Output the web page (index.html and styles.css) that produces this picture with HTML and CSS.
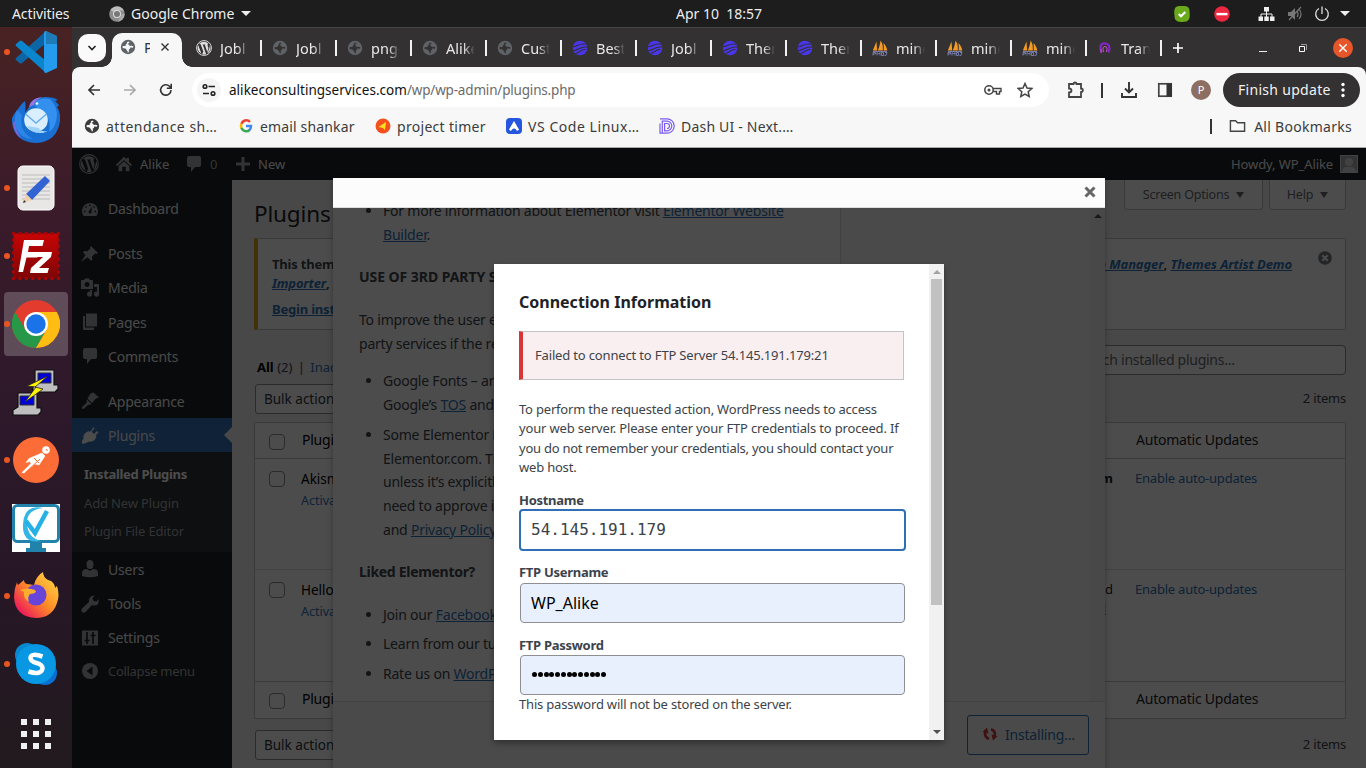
FILE: index.html
```
<!DOCTYPE html>
<html lang="en">
<head>
<meta charset="utf-8">
<title>Plugins</title>
<link rel="stylesheet" href="styles.css">
</head>
<body>
<svg class="defs" width="0" height="0">
  <symbol id="globe" viewBox="0 0 16 16"><circle cx="8" cy="8" r="7.200" fill="currentColor"/><path d="M8.300 2.500q-1.800.4-1.500 1.800.2 1-.9 1.200l-.4 1.500H3.200q-.9.300-.7 1.400.5 1 2 .9 1.700.1 1.900 1.300.3 1.300 1.200 1.700l.2 1.400q.9-.2 1.200-1.500l-.3-1.500 1.300-.9.200-1.300q1.100-.3 2.700.3l.6-1.200-1.600-.8-2.200.2-.6-1.400H8l-.2-1 1.500-.6V3z" fill="var(--cut)"/></symbol>
  <symbol id="wave" viewBox="0 0 16 16"><circle cx="8" cy="8" r="7.300" fill="#4a36ea"/><path d="M0 6.500C5 8 6 2.500 14 4.300M1 10.500c5 .8 6-4.500 14.500-3.400M3.500 13.500c3.500-.5 5-4.300 10-4" fill="none" stroke="#333132" stroke-width="1.100"/></symbol>
  <symbol id="sail" viewBox="0 0 16 16"><path d="M.8 10.500 4.500 1.500l.7 9zM5.800 10.500C7.200 7 8.200 4 8.500.5c2.300 3 2.600 6.500 2.300 10zM11.600 10.500c.4-3 .2-5-.3-7.500 2.200 2 3.500 4.500 4 7.500z" fill="#f29a24"/><path d="M1 15.500v-3h2.500V14H1M5 15.500v-3l2 1.500 1-1.500v3M9.500 12.500v3h2v-3zM13 12.500h2l-1 3h-1.500M1 11.500h14" fill="none" stroke="#7c83b5" stroke-width=".9"/></symbol>
  <symbol id="wp" viewBox="0 0 20 20"><circle cx="10" cy="10" r="9.300" fill="none" stroke="currentColor" stroke-width="1.200"/><path d="M2.800 6.300A8 8 0 0 0 6.800 17.200zM4 4.800C5 6 4.800 5 6 5.500L9.300 15l1.200-3.500L8.600 6l-1-.5h4.500l-1 .5 3 9.200 1.300-4.500c.4-2-.8-3-1-4.200-.1-1 .7-1.600 1.300-1.600A8 8 0 0 0 4 4.800zM10.200 11l-2.400 6.800c1.600.5 3.400.4 4.900-.1zM17.100 6.300c.2 1.800-.1 3-.7 4.600L14.200 17a8 8 0 0 0 2.900-10.700z" fill="currentColor"/></symbol>
  <symbol id="bubble" viewBox="0 0 20 20"><path d="M5 2h10q2 0 2 2v7q0 2-2 2h-4l-4 5v-5H5q-2 0-2-2V4q0-2 2-2z" fill="currentColor"/></symbol>
</svg>

<header class="topbar">
  <span class="activities">Activities</span>
  <svg class="app-ic" viewBox="0 0 16 16"><circle cx="8" cy="8" r="7.800" fill="#8d8d8d"/><path d="M8 8 1.500 4A8 8 0 0 1 15 4.500H8z" fill="#bdbdbd"/><path d="M9 15.800 13 8h2.500A8 8 0 0 1 9 15.800z" fill="#aaa"/><circle cx="8" cy="8" r="4" fill="#ddd"/><circle cx="8" cy="8" r="3" fill="#777"/></svg>
  <span class="appname">Google Chrome</span>
  <svg class="tri" viewBox="0 0 10 5"><path d="M0 0h10L5 5z" fill="#eee"/></svg>
  <span class="clock">Apr 10&nbsp; 18:57</span>
  <svg class="t1" viewBox="0 0 16 16"><path d="M5 0h5q6 0 5.500 6 1.500 10-5.500 9.800Q0 17 .5 9.500-1 0 5 0z" fill="#6aa81c"/><path d="M4.700 8 7 10.300 11.300 6" fill="none" stroke="#fff" stroke-width="2"/></svg>
  <svg class="t2" viewBox="0 0 16 16"><circle cx="8" cy="8" r="7.800" fill="#ee2740"/><path d="M2.500 6.900h11v2.400h-11z" fill="#fff"/></svg>
  <svg class="t3" viewBox="0 0 16 14"><path d="M5.500 0h5v4.500h-5zM0 9.500h4.500V14H0zM5.800 9.500h4.500V14H5.800zM11.500 9.500H16V14h-4.500z" fill="#eee"/><path d="M8 4v6M2.500 10V7h11v3" fill="none" stroke="#eee"/></svg>
  <svg class="t4" viewBox="0 0 16 16"><path d="M1 6h3l4-4v12l-4-4H1z" fill="#777"/><path d="M10 5q2 3 0 6M12 3q4 5 0 10M2 14 14 1" fill="none" stroke="#777" stroke-width="1.200"/></svg>
  <svg class="t5" viewBox="0 0 16 16"><path d="M5 2.500a6.300 6.300 0 1 0 6 0M8 .5V8" fill="none" stroke="#ddd" stroke-width="1.300"/></svg>
  <svg class="t6" viewBox="0 0 10 5"><path d="M0 0h10L5 5z" fill="#eee"/></svg>
</header>

<div class="desktop">
<nav class="dock">
  <div class="app run"><svg viewBox="0 0 48 48"><path d="M34 3v12L10 35q-1 1-2.500 0L4 32q-1-1 0-2z" fill="#0c66a5"/><path d="M34 45V33L10 13q-1-1-2.500 0L4 16q-1 1 0 2z" fill="#0a86cf"/><path d="M34 3 45 8v32l-11 5q-2 0-2-2V5q0-2 2-2z" fill="#259bed"/><path d="M34 3 45 8v8H34z" fill="#1a6595" opacity=".6"/></svg></div>
  <div class="app"><svg viewBox="0 0 48 48"><path d="M0 22q2-5 6-9 4-6 7-8 1 6 0 12l4-6Q18 2 33 1q9 0 13 3l-3 1 4 4-2 2q4 6 3 14-3 21-24 22Q2 46 0 26z" fill="#1a70d2"/><path d="M22 8Q27 1 38 3q6 6 7 14 0 14-8 19 3-16-9-21z" fill="#3390ee"/><path d="M17 11Q19 2 30 1q-7 3-8 8z" fill="#9a72e4"/><path d="M5 14q-6 14 3 24 5 5 13 5-15-8-11-24z" fill="#2b86e8"/><path d="M1 27q1 11 9 16-7-9-7-18z" fill="#7b66da"/><circle cx="24" cy="24" r="11.800" fill="#d9efff"/><path d="M15 30q4 8 16 7l5-2q-8 1-9-3z" fill="#9fd2fb"/><path d="m13.500 18 10.500 9 10.500-9" fill="none" stroke="#6aaeea" stroke-width="1.500"/><circle cx="25" cy="7.500" r="1.300" fill="#dff"/></svg></div>
  <div class="app run"><svg viewBox="0 0 48 48"><rect x="6" y="2" width="36" height="44" rx="5" fill="#e8e7e6" stroke="#fff"/><path d="M10 11h28M10 15h28M10 19h28M10 23h28M10 27h28M10 31h28M10 35h28" stroke="#bbb"/><path d="m14 30 19-18 5 5-18 19z" fill="#3163d2"/><path d="m14 30 6 6-9 3z" fill="#efd0aa"/><path d="m12 36 2 2-3 1z" fill="#333"/></svg></div>
  <div class="app run"><svg viewBox="0 0 48 48"><defs><linearGradient id="fz" x2="0" y2="1"><stop stop-color="#c80404"/><stop offset="1" stop-color="#7e0505"/></linearGradient></defs><rect x="1.500" y="1.500" width="45" height="45" fill="url(#fz)"/><rect x="1.500" y="1.500" width="45" height="45" fill="none" stroke="#a80505" stroke-width="3.400" stroke-dasharray="0 6.430" stroke-linecap="round"/><path d="M12 8h20l-1.500 6H17l-1 6h11l-1.500 5.500H14.500L11 40H6.500zM22 20h18l-1 5-12 11h10l-1.500 5H18l1-5 12-11H21z" fill="#fff"/></svg></div>
  <div class="app run active"><svg viewBox="0 0 48 48"><circle cx="24" cy="24" r="24" fill="#e33b2e"/><path d="M3.200 12A24 24 0 0 0 24 48l10-18-10 6-10.500-6z" fill="#279847"/><path d="M24 12h20.800A24 24 0 0 1 24 48l10.400-18z" fill="#fdbd13"/><circle cx="24" cy="24" r="12" fill="#fff"/><circle cx="24" cy="24" r="9.700" fill="#1a73e8"/></svg></div>
  <div class="app"><svg viewBox="0 0 48 48"><path d="M23 2h19v15h4v4l-3 3H21v-5l2-3zM6 25h19v15h4v4l-3 3H1v-5l5-3z" fill="#bebebe" stroke="#111" stroke-width="1.200"/><path d="M26 5h13v10H26zM8 28h14v9H8z" fill="#0000d8" stroke="#333"/><path d="M36 8 15 18l9 1-11 15 18-13-8-2z" fill="#fff400" stroke="#222" stroke-width=".8"/></svg></div>
  <div class="app run"><svg viewBox="0 0 48 48"><circle cx="24" cy="24" r="23" fill="#fb6c37"/><circle cx="34" cy="14" r="3.800" fill="#fff"/><path d="m30 17 3 3-6 9-4-1-11 9-2-.5 9-9-1-2-4 1 3-4z" fill="#fff" stroke="#fff" stroke-width=".6"/><path d="m14 36 14-13M22 22l5 5M34 13l1.500 2" stroke="#fb6c37"/></svg></div>
  <div class="app"><svg viewBox="0 0 48 48"><path d="M0 0h48v48H0z" fill="#fff"/><rect x="1.500" y="1.500" width="45" height="36" rx="4" fill="#fff" stroke="#2183ac" stroke-width="3"/><path d="M18 39h12v5h4v4H14v-4h4z" fill="#2183ac"/><path d="M31 4Q12 0 11 20t18 17q-13-3-14-17T31 4z" fill="#34b5e6"/><path d="m14 17 9 12L35 7" fill="none" stroke="#26b0e6" stroke-width="4.500"/></svg></div>
  <div class="app run"><svg viewBox="0 0 48 48"><defs><linearGradient id="ff" x1="1" x2="0" y2="1"><stop stop-color="#ffe34a"/><stop offset=".5" stop-color="#ff8a26"/><stop offset=".85" stop-color="#ed2058"/></linearGradient></defs><path d="M5 10q0 2 1 3l6-5q0 3 3 4l7 1q2-9 9-13 0 5 5 8l3 1q4 3 4 7l2-2q3 9 0 17-5 15-21 15Q3 45 2 25q0-8 3-15z" fill="url(#ff)"/><circle cx="24" cy="23" r="10.500" fill="#6845d8"/><path d="M8 18q8-3 15 0l1 2q-2 2-6 2-3 3-1 8-6-3-5-10z" fill="#ffad2c"/></svg></div>
  <div class="app run"><svg viewBox="0 0 48 48"><circle cx="15" cy="15" r="12" fill="#0787cd"/><circle cx="33" cy="33" r="12" fill="#0870d0"/><circle cx="24" cy="24" r="20" fill="#0797e3"/><path d="M30.500 16.500Q19 12.500 18.500 18q0 3.500 6 5 6 1.500 6 5.500-1 7-14 3" fill="none" stroke="#fff" stroke-width="4.500"/></svg></div>
  <div class="app grid"><svg viewBox="0 0 48 48"><path d="M9 9h6v6H9zM21 9h6v6h-6zM33 9h6v6h-6zM9 21h6v6H9zM21 21h6v6h-6zM33 21h6v6h-6zM9 33h6v6H9zM21 33h6v6h-6zM33 33h6v6h-6z" fill="#efefef"/></svg></div>
</nav>

<main class="browser">
  <div class="tabstrip">
    <div class="search-tabs"><svg viewBox="0 0 10 10"><path d="m1.500 3 3.500 3.500L8.500 3" fill="none" stroke="#222" stroke-width="1.600"/></svg></div>
    <div class="tab-active"><svg class="fav grey light" viewBox="0 0 16 16"><use href="#globe"/></svg><span>P</span><svg class="tx" viewBox="0 0 8 8"><path d="m.5.5 7 7m0-7-7 7" stroke="#333" stroke-width="1.400"/></svg></div>
    <div class="tabs">
      <div class="tab first"><svg class="fav white"><use href="#wp"/></svg><span>Jobl</span></div>
      <div class="tab"><svg class="fav grey"><use href="#globe"/></svg><span>Jobl</span></div>
      <div class="tab"><svg class="fav grey"><use href="#globe"/></svg><span>png-</span></div>
      <div class="tab"><svg class="fav grey"><use href="#globe"/></svg><span>Alike</span></div>
      <div class="tab"><svg class="fav grey"><use href="#globe"/></svg><span>Cust</span></div>
      <div class="tab"><svg class="fav"><use href="#wave"/></svg><span>Best</span></div>
      <div class="tab"><svg class="fav"><use href="#wave"/></svg><span>Jobl</span></div>
      <div class="tab"><svg class="fav"><use href="#wave"/></svg><span>Ther</span></div>
      <div class="tab"><svg class="fav"><use href="#wave"/></svg><span>Ther</span></div>
      <div class="tab"><svg class="fav"><use href="#sail"/></svg><span>mind</span></div>
      <div class="tab"><svg class="fav"><use href="#sail"/></svg><span>mind</span></div>
      <div class="tab"><svg class="fav"><use href="#sail"/></svg><span>mind</span></div>
      <div class="tab"><svg class="fav" viewBox="0 0 16 16"><path d="M4.500 12.500Q1.500 3 8 3.500t3.500 9" fill="none" stroke="#8427c8" stroke-width="2.200"/><path d="M6.500 12Q5 6.500 8 6.500T9.500 12M4 9v4" fill="none" stroke="#d052c8" stroke-width="1"/></svg><span>Tran</span></div>
    </div>
    <svg class="plus" viewBox="0 0 10 10"><path d="M5 0v10M0 5h10" stroke="#fff" stroke-width="1.700"/></svg>
    <svg class="wmin" viewBox="0 0 8 8"><path d="M0 7.500h8" stroke="#eee"/></svg>
    <svg class="wmax" viewBox="0 0 8 8"><path d="M.5 2.500h5v5h-5z" fill="none" stroke="#fff"/><path d="M2 .5h5.500V6" fill="none" stroke="#999"/></svg>
    <span class="wclose"><svg viewBox="0 0 8 8"><path d="m.3.3 7.400 7.400m0-7.400L.3 7.700" stroke="#fff" stroke-width="1.400"/></svg></span>
  </div>
  <div class="toolbar">
    <svg class="nav" viewBox="0 0 16 16"><path d="M14 8H3m5-5L3 8l5 5" fill="none" stroke="#333" stroke-width="1.700"/></svg>
    <svg class="nav" viewBox="0 0 16 16"><path d="M2 8h11M8 3l5 5-5 5" fill="none" stroke="#aaa" stroke-width="1.700"/></svg>
    <svg class="nav" viewBox="0 0 16 16"><path d="M13 8a5.200 5.200 0 1 1-1.500-3.700L13 6M13.200 1.800V6.200H8.800" fill="none" stroke="#333" stroke-width="1.600"/></svg>
    <div class="omni">
      <span class="site"><svg viewBox="0 0 14 14"><circle cx="3" cy="3.500" r="1.800"/><path d="M6.500 3.500H13M1 10.500h6"/><circle cx="11" cy="10.500" r="1.800"/></svg></span>
      <span class="url">alikeconsultingservices.com<i>/wp/wp-admin/plugins.php</i></span>
      <svg class="key" viewBox="0 0 18 12"><circle cx="5" cy="6" r="4.200" fill="none" stroke="#444" stroke-width="1.500"/><circle cx="5" cy="6" r="1.500" fill="#444"/><path d="M9.200 4.500H17v3h-1.500V10h-3V7.500H9.200" fill="none" stroke="#444" stroke-width="1.400"/></svg>
      <svg class="star" viewBox="0 0 16 16"><path d="m8 1.500 2 4.500 4.800.5-3.600 3.200 1 4.800L8 12l-4.200 2.500 1-4.800L1.200 6.500 6 6z" fill="none" stroke="#444" stroke-width="1.500"/></svg>
    </div>
    <svg class="puz" viewBox="0 0 18 18"><path d="M2 3h4.500q0-1.500 1.500-1.500T9.500 3H14v4.500q1.800 0 1.800 1.700T14 11v5H2v-4.500q2.500 0 2.500-2T2 7.500z" fill="none" stroke="#444" stroke-width="1.800"/></svg>
    <i class="bar"></i>
    <svg class="dl" viewBox="0 0 16 16"><path d="M8 0v10M4 6.500l4 4 4-4M1 11v4h14v-4" fill="none" stroke="#333" stroke-width="1.900"/></svg>
    <svg class="pan" viewBox="0 0 16 16"><rect x="1.800" y="1.800" width="12.400" height="12.400" fill="none" stroke="#444" stroke-width="1.700"/><path d="M9.500 1.500H15v13H9.500z" fill="#333"/></svg>
    <span class="avatar">P</span>
    <span class="finish">Finish update<svg viewBox="0 0 4 16"><circle cx="2" cy="2.500" r="1.700"/><circle cx="2" cy="8" r="1.700"/><circle cx="2" cy="13.500" r="1.700"/></svg></span>
  </div>
  <div class="bookmarks">
    <svg class="fav dk light"><use href="#globe"/></svg><span class="b1">attendance sh…</span>
    <svg class="fav" viewBox="0 0 16 16"><g fill="none" stroke-width="2.500"><path d="M12 4A5 5 0 0 0 3.500 6" stroke="#ea4335"/><path d="M3.500 5.700a5 5 0 0 0 0 4.600" stroke="#fbbc05"/><path d="M3.500 10a5 5 0 0 0 8 2" stroke="#34a853"/><path d="M8 8h5q0 3-2 4.500" stroke="#4285f4"/></g></svg><span class="b2">email shankar</span>
    <svg class="fav" viewBox="0 0 16 16"><circle cx="8" cy="8" r="7.500" fill="#f4511e"/><path d="m3.500 9 7.500-5-1 8-2-2z" fill="#ffe21f"/></svg><span class="b3">project timer</span>
    <svg class="fav" viewBox="0 0 16 16"><rect width="16" height="16" rx="4" fill="#2456df"/><path d="M8 3 3 11.500Q5 14 6 11.500q2-2 4 0 1 2.500 3 0z" fill="#fff"/></svg><span class="b4">VS Code Linux…</span>
    <svg class="fav" viewBox="0 0 16 16"><path d="M1 .8h7a7.200 7.200 0 0 1 0 14.400H1V5.500M3.300 15V3.200H8a4.800 4.800 0 0 1 0 9.600H5.600V5.500H8a2.500 2.500 0 0 1 0 5" fill="none" stroke="#7c5cf0" stroke-width="1.200"/></svg><span class="b5">Dash UI - Next.…</span>
    <i class="bar"></i>
    <svg class="fold" viewBox="0 0 18 14"><path d="M1.500 1.500H7L9 3.500h7.500v9h-15z" fill="none" stroke="#444" stroke-width="1.500"/></svg><span class="b6">All Bookmarks</span>
  </div>

  <div class="viewport">
    <div class="adminbar">
      <svg class="a-wp"><use href="#wp"/></svg>
      <svg class="a-home" viewBox="0 0 20 20"><path d="m10 2 3 3V3h2.500v4.500L19 11l-1.500 1.500L10 5.500l-7.500 7L1 11zM10 7l6 5.500V18h-4v-5H8v5H4v-5.500z" fill="currentColor"/></svg><span class="a1">Alike</span>
      <svg class="a-com"><use href="#bubble"/></svg><span class="a2">0</span>
      <svg class="a-plus" viewBox="0 0 14 14"><path d="M7 0v14M0 7h14" stroke="currentColor" stroke-width="3"/></svg><span class="a3">New</span>
      <span class="howdy">Howdy, WP_Alike</span>
      <svg class="a-av" viewBox="0 0 18 18"><path d="M0 0h18v18H0z" fill="#ddd"/><path d="M1 1h16v16H1z" fill="#aaa"/><circle cx="9" cy="7" r="4" fill="#ddd"/><path d="M2 17q1-6 7-5 6-1 7 5z" fill="#ddd"/></svg>
    </div>
    <div class="wp">
      <aside class="menu">
        <div class="mi up1"><svg viewBox="0 0 20 20"><path d="M3.800 17A8 8 0 1 1 16.200 17zM10 14.500a1.700 1.700 0 0 0 1.500-2.500L12 7.500 9 12a1.700 1.700 0 0 0 1 2.500z" fill-rule="evenodd" fill="currentColor"/><path d="M4 12.500h1.500M5.500 7.500l1 1M10 5.500V7M14.500 7.500l-1 1M16 12.500h-1.500" stroke="#1d2327" stroke-width="1.500"/></svg>Dashboard</div>
        <div class="mi gap"><svg viewBox="0 0 20 20"><path d="m11 2 7 7-1.500 1-1.500-.5-3 3 .3 3-1.300 1.300-3.500-3.500L1 18l4.500-7L3 8.500 4.300 7l3.200.3 3-3L10 3z" fill="currentColor"/></svg>Posts</div>
        <div class="mi"><svg viewBox="0 0 20 20"><path fill-rule="evenodd" d="M2 2h2l1-1.500h4L10 2h2q1 0 1 1v8H1V3q0-1 1-1zM7 4a2.500 2.500 0 1 0 .1 0zM14 6h5v10a2.500 2.500 0 1 1-2-2.300V9h-3zM12 12v4a2.500 2.500 0 1 1-2-2.300V12z" fill="currentColor"/></svg>Media</div>
        <div class="mi"><svg viewBox="0 0 20 20"><path d="M6 1.500h11v13H6zM3 4h2v11.500h9V18H3z" fill="currentColor"/></svg>Pages</div>
        <div class="mi"><svg><use href="#bubble"/></svg>Comments</div>
        <div class="mi gap"><svg viewBox="0 0 20 20"><path d="m10.500 2.500 3-1 5.500 5-3 1-4 4.500-4.500-4.500zM7 8.500l4.500 4.500-2 1-1-.5-5 4.500q-2 .5-1.500-2l5-4.500-.5-1.500z" fill="currentColor"/></svg>Appearance</div>
        <div class="mi cur"><svg viewBox="0 0 20 20"><path d="m13 2 1.500 1.500-3 3 2.500 2.500 3-3 1.500 1.500-3 3 1 1q-2 6-7.500 5L6 18l-4 1v-3l1.500-2.500q-1-5 5-7.500l1 1 3-3z" fill="currentColor"/></svg>Plugins</div>
        <div class="sub"><b>Installed Plugins</b><span>Add New Plugin</span><span>Plugin File Editor</span></div>
        <div class="mi"><svg viewBox="0 0 20 20"><ellipse cx="10" cy="5.500" rx="3.500" ry="4.500" fill="currentColor"/><path d="M2 17v-3q0-4 5-4l3 2 3-2q5 0 5 4v3q-8 2.500-16 0z" fill="currentColor"/></svg>Users</div>
        <div class="mi"><svg viewBox="0 0 20 20"><path d="M16.500 7.500 18.500 5q1 6-3.500 6.500-2 0-3-.5l-6.500 7q-2 1.500-3.500 0-1.500-1.500 0-3.500L9 8Q8 1.500 15 1.500L12.500 4l1 3z" fill="currentColor"/></svg>Tools</div>
        <div class="mi"><svg viewBox="0 0 20 20"><path d="M2.500 2.500h15q.5 0 .5.5v14.500H2V3q0-.5.500-.5z" fill="currentColor"/><path d="M7 4v12M4.500 12.500h5M13 4v12M10.500 7.500h5" stroke="#1d2327" stroke-width="1.700"/></svg>Settings</div>
        <div class="mi col"><svg viewBox="0 0 20 20"><circle cx="10" cy="10" r="8" fill="currentColor"/><path d="M12.500 5.500v9L6.500 10z" fill="#1d2327"/></svg>Collapse menu</div>
      </aside>
      <section class="content">
        <div class="head"><h1>Plugins</h1><div class="meta"><span class="so">Screen Options <i></i></span><span class="hp">Help <i></i></span></div></div>
        <div class="notice"><div class="nl"><b>This theme</b><b><a><em>Importer</em></a>, <a><em>One</em></a></b><b class="beg"><a>Begin installing</a></b></div>
          <b class="nr"><a><em>WP Job Manager</em></a>, <a><em>Themes Artist Demo</em></a></b>
          <svg viewBox="0 0 14 14"><circle cx="7" cy="7" r="6.800" fill="#787c82"/><path d="m4.300 4.300 5.400 5.400m0-5.400L4.300 9.700" stroke="#fff" stroke-width="2"/></svg></div>
        <div class="filters"><span class="views"><b>All</b> (2) <i>|</i> <a>Inactive</a></span><span class="search">Search installed plugins...</span></div>
        <div class="actions"><span class="select">Bulk actions</span><span class="items">2 items</span></div>
        <div class="table">
          <div class="tr th"><i class="cb"></i><span class="c1">Plugin</span><span class="c2"></span><span class="c3">Automatic Updates</span></div>
          <div class="tr r1"><i class="cb"></i><span class="c1">Akismet<a>Activate</a></span><span class="c2"><b>Spam</b></span><span class="c3"><a>Enable auto-updates</a></span></div>
          <div class="tr r2"><i class="cb"></i><span class="c1">Hello Dolly<a>Activate</a></span><span class="c2">summed<br><a>all</a></span><span class="c3"><a>Enable auto-updates</a></span></div>
          <div class="tr tf"><i class="cb"></i><span class="c1">Plugin</span><span class="c2"></span><span class="c3">Automatic Updates</span></div>
        </div>
        <div class="actions bottom"><span class="select">Bulk actions</span><span class="items">2 items</span></div>
      </section>
    </div>
    <div class="shade"></div>

    <div class="thickbox">
      <div class="tb-title"><svg viewBox="0 0 12 12"><path d="m1.500 1.500 9 9m0-9-9 9" stroke="#666" stroke-width="3"/></svg></div>
      <div class="tb-body">
        <div class="desc">
          <ul class="u0"><li>For more information about Elementor visit <a>Elementor Website<br>Builder</a>.</li></ul>
          <h4 class="h1st">USE OF 3RD PARTY SERVICES</h4>
          <p>To improve the user experience<br>party services if the required</p>
          <ul class="u1"><li>Google Fonts – are<br>Google’s <a>TOS</a> and</li><li>Some Elementor Pro<br>Elementor.com. The<br>unless it’s explicitly<br>need to approve it<br>and <a>Privacy Policy</a></li></ul>
          <h4 class="h2nd">Liked Elementor?</h4>
          <ul class="u2"><li>Join our <a>Facebook</a></li><li>Learn from our tutorials</li><li>Rate us on <a>WordPress</a></li></ul>
        </div>
        <div class="side"></div>
        <div class="sb"><i></i></div>
      </div>
      <div class="tb-foot"><span class="btn"><svg viewBox="0 0 16 16"><path d="M9 3.200A5 5 0 0 1 12.300 10.500M7 12.800A5 5 0 0 1 3.700 5.500" fill="none" stroke="#d63638" stroke-width="2.700"/><path d="M9.500 8.500 15.500 10l-4.500 4.500zM6.500 7.500.5 6 5 1.500z" fill="#d63638"/></svg>Installing...</span></div>
      <div class="tb-shade"></div>
    </div>

    <div class="dialog">
      <div class="form">
        <h2>Connection Information</h2>
        <div class="err">Failed to connect to FTP Server 54.145.191.179:21</div>
        <p><span class="l1">To perform the requested action, WordPress needs to access</span><br><span class="l2">your web server. Please enter your FTP credentials to proceed. If</span><br><span class="l3">you do not remember your credentials, you should contact your</span><br>web host.</p>
        <label>Hostname</label><div class="inp focus">54.145.191.179</div>
        <label>FTP Username</label><div class="inp">WP_Alike</div>
        <label>FTP Password</label><div class="inp pw"><i></i><i></i><i></i><i></i><i></i><i></i><i></i><i></i><i></i><i></i><i></i><i></i><i></i></div>
        <small>This password will not be stored on the server.</small>
      </div>
      <div class="dsb"><i class="up"></i><i class="thumb"></i><i class="down"></i></div>
    </div>
  </div>
</main>
</div>
</body>
</html>
```
FILE: styles.css
```
* { box-sizing: border-box; }
body { margin: 0; width: 1366px; height: 768px; overflow: hidden; font-family: "Noto Sans", sans-serif; background: #1d1d1d; white-space: nowrap; }
i { font-style: normal; }
svg { flex: none; display: block; }
.defs { position: absolute; }
a { color: #2f72b5; text-decoration: underline; }

.topbar { height: 27px; display: flex; align-items: center; color: #eee; font-size: 14px; line-height: 27px; background: #1d1d1d; }
.activities { width: 109px; padding-left: 12px; letter-spacing: -.1px; }
.app-ic { width: 16px; height: 16px; margin-right: 6px; }
.appname { width: 110px; letter-spacing: 0; }
.tri, .t6 { width: 10px; height: 5px; }
.clock { margin-left: 425px; width: 498px; letter-spacing: 0; }
.t1 { width: 16px; height: 16px; margin-right: 24px; }
.t2 { width: 16px; height: 16px; margin-right: 28px; }
.t3 { width: 17px; height: 14px; margin-right: 12px; }
.t4 { width: 16px; height: 16px; margin-right: 11px; }
.t5 { width: 16px; height: 16px; margin-right: 10px; }

.desktop { display: flex; height: 741px; }
.dock { width: 72px; overflow: hidden; background: linear-gradient(#492323, #3a1b2a 25%, #2e192b 50%, #271726 75%, #211a1e); }
.app { height: 68px; display: flex; align-items: center; padding-left: 12px; position: relative; }
.app:first-child { margin-top: -9px; }
.app svg { width: 48px; height: 48px; }
.app.grid { padding-top: 4px; }
.app.run::before { content: ""; position: absolute; left: 4px; top: 31px; width: 6px; height: 6px; border-radius: 50%; background: #e95420; z-index: 2; }
.app.active::after { content: ""; position: absolute; left: 4px; top: 2px; width: 64px; height: 64px; border-radius: 4px; background: rgba(255,255,255,.22); }
.app.active svg { position: relative; z-index: 1; }

.browser { width: 1294px; display: flex; flex-direction: column; background: #333132; }
.tabstrip { height: 40px; border-top: 1px solid #454344; display: flex; align-items: center; padding: 0 13px 0 6px; font-size: 14.500px; }
.search-tabs { width: 28px; height: 28px; border-radius: 10px; background: #fafafa; display: grid; place-items: center; margin-right: 6px; }
.search-tabs svg { width: 10px; height: 10px; }
.tab-active { width: 70px; height: 34px; align-self: flex-end; border-radius: 10px 10px 0 0; background: #f7f7f7; display: flex; align-items: center; padding: 0 12px 6px 8px; position: relative; color: #333; }
.tab-active::before, .tab-active::after { content: ""; position: absolute; bottom: 0; width: 10px; height: 10px; }
.tab-active::before { left: -10px; background: radial-gradient(circle at 0 0, transparent 9.5px, #f7f7f7 10px); }
.tab-active::after { right: -10px; background: radial-gradient(circle at 100% 0, transparent 9.5px, #f7f7f7 10px); }
.tab-active span { width: 6px; overflow: hidden; margin: 0 11px 0 8px; }
.tx { width: 8px; height: 8px; }
.fav { width: 16px; height: 16px; }
.grey { color: #5f6368; --cut: #333132; }
.light { --cut: #f7f7f7; }
.dk { color: #3c3c3c; }
.white { color: #ddd; }
.tabs { display: flex; margin-left: 4px; }
.tab { width: 75px; height: 16px; border-right: 2px solid #f2f2f2; padding-left: 10px; display: flex; align-items: center; color: #e8e8e8; }
.tab.first { width: 76px; }
.tab span { margin-left: 8px; width: 29px; overflow: hidden; line-height: 22px; -webkit-mask-image: linear-gradient(90deg, #000 60%, transparent); mask-image: linear-gradient(90deg, #000 60%, transparent); }
.plus { width: 10px; height: 10px; margin-left: 11px; }
.wmin { width: 8px; height: 8px; margin-left: 76px; }
.wmax { width: 8px; height: 8px; margin-left: 32px; }
.wclose { width: 20px; height: 20px; border-radius: 50%; background: #e6562a; margin-left: auto; display: grid; place-items: center; }
.wclose svg { width: 8px; height: 8px; }

.toolbar { height: 46px; background: #f7f7f7; border-radius: 8px 8px 0 0; display: flex; align-items: center; padding: 0 6px 0 14px; }
.nav { width: 16px; height: 16px; margin-right: 20px; }
.omni { width: 857px; height: 34px; border-radius: 17px; background: #fff; margin-left: -2px; display: flex; align-items: center; padding: 0 16px 0 5px; font-size: 13.500px; color: #111; }
.site { width: 24px; height: 24px; border-radius: 50%; background: #f5f5f5; display: grid; place-items: center; margin-right: 8px; }
.site svg { width: 14px; height: 14px; fill: none; stroke: #222; stroke-width: 1.600; }
.url { letter-spacing: .03px; }
.url i { color: #6b6b6b; letter-spacing: -.18px; }
.key { width: 18px; height: 12px; margin-left: auto; margin-right: 15px; }
.star { width: 16px; height: 16px; }
.puz { width: 18px; height: 18px; margin-left: 18px; }
.bar { width: 2px; height: 15px; background: #333; }
.toolbar .bar { margin-left: 16px; }
.dl { width: 16px; height: 16px; margin-left: 18px; }
.pan { width: 16px; height: 16px; margin-left: 20px; }
.avatar { width: 20px; height: 20px; border-radius: 50%; background: #8d6e63; color: #fff; font-size: 11px; line-height: 20px; text-align: center; margin-left: 18px; }
.finish { width: 137px; height: 34px; border-radius: 17px; background: #333132; color: #f2f2f2; margin-left: auto; padding: 0 15px 1px; display: flex; align-items: center; justify-content: space-between; font-size: 14px; letter-spacing: .3px; }
.finish svg { width: 4px; height: 16px; fill: #fff; }
.bookmarks { height: 35px; background: #f7f7f7; border-bottom: 1px solid #aaa; display: flex; align-items: center; padding: 0 0 8px 12px; font-size: 14px; color: #3c3c3c; }
.bookmarks span { margin-left: 6px; }
.b1 { width: 132px; letter-spacing: .5px; } .b2 { width: 115px; letter-spacing: .15px; } .b3 { width: 109px; letter-spacing: .3px; } .b4 { width: 131px; letter-spacing: .55px; } .b5 { letter-spacing: .2px; }
.bookmarks .bar { margin-left: auto; margin-right: 17px; }
.fold { width: 17px; height: 14px; }
.bookmarks .b6 { margin-left: 8px; margin-right: 14px; letter-spacing: .28px; }

.viewport { height: 620px; position: relative; overflow: hidden; background: #f0f0f1; font-size: 13px; }
.shade { position: absolute; inset: 0; background: rgba(0,0,0,.7); }
.adminbar { height: 32px; background: #1d2327; color: #f0f0f1; display: flex; align-items: center; padding: 0 8px 0 7px; line-height: 32px; }
.adminbar svg { color: #a7aaad; width: 20px; height: 20px; }
.adminbar .a-home { margin: 0 6px 0 16px; width: 18px; }
.a1 { width: 45px; padding-left: 1px; }
.a2 { width: 32px; padding-left: 6px; color: #a7aaad; }
.adminbar .a-plus { width: 14px; height: 14px; margin-right: 8px; }
.howdy { margin-left: auto; margin-right: 7px; letter-spacing: -.1px; }
.adminbar .a-av { width: 18px; height: 18px; }
.wp { display: flex; height: 588px; }
.menu { width: 160px; background: #1d2327; padding-top: 12px; font-size: 14px; color: #f0f0f1; }
.mi { height: 34.200px; display: flex; align-items: center; padding-left: 8px; letter-spacing: -.2px; position: relative; }
.up1 { padding-bottom: 1px; }
.mi svg { width: 20px; height: 20px; color: #a7aaad; margin-right: 8px; }
.gap { margin-top: 10.500px; }
.cur { background: #3573bd; }
.cur svg { color: #fff; }
.cur::after { content: ""; position: absolute; right: 0; border: 8px solid transparent; border-right-color: #f0f0f1; }
.sub { height: 100px; background: #2c3338; display: flex; flex-direction: column; padding: 8px 12px; font-size: 13px; line-height: 28.400px; color: #a7aaad; }
.sub b { color: #fff; letter-spacing: -.3px; }
.sub span { letter-spacing: -.15px; }
.col { font-size: 13px; color: #a7aaad; letter-spacing: -.3px; height: 32px; }
.content { width: 1134px; padding: 0 20px 0 22px; color: #3c434a; }
.head { height: 58px; display: flex; justify-content: space-between; }
h1 { margin: 18px 0 0; font-size: 22.500px; font-weight: 400; line-height: 32px; color: #1d2327; letter-spacing: -.15px; }
.meta { display: flex; gap: 6px; color: #646970; font-size: 12.500px; letter-spacing: -.2px; }
.meta span { height: 30px; border: 1px solid #c3c4c7; border-top: 0; border-radius: 0 0 4px 4px; background: #fff; display: flex; align-items: center; justify-content: center; gap: 7px; }
.so { width: 139px; } .hp { width: 77px; }
.meta i { border: 4px solid transparent; border-top: 6px solid #646970; border-bottom: 0; }
.notice { height: 92px; border: 1px solid #c3c4c7; border-left: 4px solid #dba617; background: #fff; display: flex; padding: 16px 13px 0 14px; line-height: 19px; }
.nl { display: flex; flex-direction: column; letter-spacing: -.2px; color: #3c434a; }
.beg { margin-top: 7px; }
.nr { margin-left: auto; margin-right: 26px; letter-spacing: -.12px; }
.notice svg { width: 14px; height: 14px; margin-top: -4px; }
.filters { height: 46px; display: flex; justify-content: space-between; padding-top: 15px; }
.views { padding: 12px 0 0 3px; line-height: 20px; }
.views b { color: #000; }
.views i { margin: 0 2px; }
.views a { text-decoration: none; }
.search { width: 280px; height: 30px; border: 1px solid #8c8f94; border-radius: 4px; background: #fff; padding-left: 8px; font-size: 14px; line-height: 28px; color: #646970; letter-spacing: -.27px; }
.actions { height: 46px; display: flex; justify-content: space-between; padding: 8px 0 0 1px; }
.select { width: 140px; height: 30px; border: 1px solid #8c8f94; border-radius: 3px; background: #fff; padding-left: 8px; line-height: 28px; font-size: 13.500px; color: #2c3338; }
.items { line-height: 29px; letter-spacing: -.2px; }
.table { height: 297px; border: 1px solid #c3c4c7; background: #fff; }
.tr { display: flex; font-size: 13.500px; line-height: 19px; color: #1d2327; }
.cb { width: 16px; height: 16px; border: 1px solid #8c8f94; border-radius: 4px; background: #fff; margin: 12px 16px 0 14px; }
.th, .tf { height: 36px; padding-top: 0; }
.th .c1, .tf .c1, .th .c3, .tf .c3 { padding-top: 7px; font-size: 14px; letter-spacing: -.23px; padding-left: 1px; }
.th .cb, .tf .cb { margin-top: 11px; }
.th { border-bottom: 1px solid #c3c4c7; }
.r1, .r2 { height: 111px; border-bottom: 1px solid #dcdcde; }
.r2 { height: 112px; border-color: #c3c4c7; }
.r1 .c1, .r2 .c1, .r1 .c2, .r2 .c2, .r1 .c3, .r2 .c3 { padding-top: 10px; }
.c1 { width: 300px; color: #000; display: flex; flex-direction: column; line-height: 20px; }
.c1 a { text-decoration: none; font-size: 12.500px; line-height: 24px; }
.c2 { width: 513px; text-align: right; font-size: 13px; padding-right: 1px; }
.c2 a { margin-right: 7px; }
.c3 { margin-left: 21px; font-size: 13px; letter-spacing: -.22px; }
.c3 a { text-decoration: none; }
.bottom { padding-top: 11px; }

.thickbox { position: absolute; left: 261px; top: 30px; width: 772px; height: 600px; background: #fff; box-shadow: 0 3px 6px rgba(0,0,0,.3); display: flex; flex-direction: column; }
.tb-title { height: 30px; background: #fcfcfc; border-bottom: 1px solid #ddd; display: flex; justify-content: flex-end; align-items: center; padding: 0 9px 2px; position: relative; z-index: 1; }
.tb-title svg { width: 12px; height: 12px; }
.tb-body { height: 493px; display: flex; overflow: hidden; font-size: 14px; line-height: 24px; color: #3c434a; letter-spacing: -.22px; }
.desc { width: 507px; padding-left: 26px; }
.desc ul { margin: 0; padding-left: 24px; }
.desc .u0 { margin-top: -9px; }
.desc h4 { margin: 0; font-size: 14px; letter-spacing: -.3px; }
.desc .h1st { margin-top: 18px; letter-spacing: -.05px; }
.desc p { margin: 19px 0 13px; }
.u1 { line-height: 23.850px; }
.u1 li + li { margin-top: 6px; }
.desc .h2nd { margin: 18px 0 19px; }
.u2 li { margin-bottom: 5.500px; }
.side { width: 250px; border-left: 1px solid #ddd; background: #f4f8f6; }
.sb { width: 15px; background: #f1f1f1; display: flex; justify-content: center; padding-top: 6px; }
.sb i { width: 8px; height: 4px; border: 4px solid transparent; border-bottom-color: #505050; border-top: 0; }
.tb-foot { height: 77px; border-top: 1px solid #ddd; background: #f4f8f6; display: flex; justify-content: flex-end; padding: 13px 16px; }
.btn { width: 122px; height: 40px; border: 1px solid #2f72b5; border-radius: 3px; color: #2f72b5; display: flex; align-items: center; padding: 0 0 2px 14px; gap: 7px; font-size: 14px; letter-spacing: -.2px; }
.btn svg { width: 16px; height: 16px; }
.tb-shade { position: absolute; inset: 30px 0 0; background: rgba(0,0,0,.7); }

.dialog { position: absolute; left: 422px; top: 116px; width: 450px; height: 476px; background: #fff; box-shadow: 0 3px 6px rgba(0,0,0,.35); display: flex; color: #3c434a; }
.form { width: 435px; padding: 0 24px 0 25px; }
h2 { margin: 27px 0 18px; font-size: 16px; line-height: 22px; color: #1d2327; }
.err { width: 385px; height: 49px; border: 1px solid #c3c4c7; border-left: 4px solid #d63638; background: #faeff0; padding-left: 12px; line-height: 47px; letter-spacing: -.16px; }
.form p { margin: 20px 0 13px; line-height: 19.400px; letter-spacing: -.2px; }
.form .l2 { letter-spacing: -.17px; }
.form .l3 { letter-spacing: -.25px; }
label { display: block; font-weight: 700; line-height: 18px; letter-spacing: -.28px; }
.inp { margin: 2px 0 13px 1px; width: 385px; height: 40px; border: 1px solid #8c8f94; border-radius: 4px; background: #e8f0fe; padding-left: 10px; line-height: 38px; font-size: 16px; color: #000; }
.focus { margin: 0 0 12px; width: 387px; height: 42px; border: 2px solid #2f6fb3; background: #fff; color: #3c434a; font-family: "DejaVu Sans Mono", monospace; font-size: 16px; letter-spacing: 0; }
.pw { display: flex; align-items: center; gap: .75px; padding-left: 11px; margin-top: 1px; margin-bottom: 0; }
.pw i { width: 5px; height: 5px; border-radius: 50%; background: #000; }
small { display: block; font-size: 13px; line-height: 19px; letter-spacing: -.19px; }
.dsb { width: 15px; background: #f1f1f1; display: flex; flex-direction: column; align-items: center; padding: 6px 0; }
.up { border: 4px solid transparent; border-bottom-color: #a3a3a3; border-top: 0; }
.thumb { width: 11px; height: 326px; background: #c1c1c1; margin-top: 5px; }
.down { border: 4px solid transparent; border-top-color: #505050; border-bottom: 0; margin-top: auto; }
```
